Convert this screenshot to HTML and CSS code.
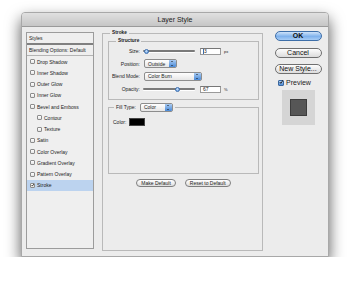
FILE: index.html
```html
<!DOCTYPE html>
<html lang="en">
<head>
    <meta charset="UTF-8">
    <meta name="viewport" content="width=device-width, initial-scale=1.0">
    <title>Layer Style</title>
    <link rel="stylesheet" href="styles.css">
</head>
<body>
    <div class="window">
        <div class="titlebar">Layer Style</div>

        <div class="dialog">
            <div class="style-list">
                <div class="list-head">Styles</div>
                <div class="list-blend">Blending Options: Default</div>
                <div class="list-item"><span class="box"></span>Drop Shadow</div>
                <div class="list-item"><span class="box"></span>Inner Shadow</div>
                <div class="list-item"><span class="box"></span>Outer Glow</div>
                <div class="list-item"><span class="box"></span>Inner Glow</div>
                <div class="list-item"><span class="box"></span>Bevel and Emboss</div>
                <div class="list-item sub"><span class="box"></span>Contour</div>
                <div class="list-item sub"><span class="box"></span>Texture</div>
                <div class="list-item"><span class="box"></span>Satin</div>
                <div class="list-item"><span class="box"></span>Color Overlay</div>
                <div class="list-item"><span class="box"></span>Gradient Overlay</div>
                <div class="list-item"><span class="box"></span>Pattern Overlay</div>
                <div class="list-item selected">
                    <span class="box"><svg viewBox="0 0 6 6"><polyline points="1,3 2.4,4.8 5.6,0.4" /></svg></span>Stroke
                </div>
            </div>

            <fieldset class="panel">
                <legend>Stroke</legend>

                <fieldset class="group">
                    <legend>Structure</legend>
                    <div class="row">
                        <span class="label">Size:</span>
                        <div class="slider"><span class="thumb" style="left: calc(7% - 2.5px)"></span></div>
                        <span class="field"><span class="caret"></span>3</span>
                        <span class="unit">px</span>
                    </div>
                    <div class="row">
                        <span class="label">Position:</span>
                        <span class="popup short">Outside<span class="arrows"></span></span>
                    </div>
                    <div class="row">
                        <span class="label">Blend Mode:</span>
                        <span class="popup wide">Color Burn<span class="arrows"></span></span>
                    </div>
                    <div class="row">
                        <span class="label">Opacity:</span>
                        <div class="slider"><span class="thumb" style="left: calc(67% - 2.5px)"></span></div>
                        <span class="field">67</span>
                        <span class="unit">%</span>
                    </div>
                </fieldset>

                <fieldset class="group fill">
                    <legend>Fill Type: <span class="popup short">Color<span class="arrows"></span></span></legend>
                    <div class="color-row">Color: <span class="swatch"></span></div>
                </fieldset>

                <div class="defaults">
                    <button class="small-btn">Make Default</button>
                    <button class="small-btn">Reset to Default</button>
                </div>
            </fieldset>

            <div class="actions">
                <button class="btn primary">OK</button>
                <button class="btn">Cancel</button>
                <button class="btn">New Style...</button>
                <div class="preview">
                    <span class="box blue"><svg viewBox="0 0 6 6"><polyline points="1,3 2.4,4.8 5.6,0.4" /></svg></span>Preview
                </div>
                <div class="thumbnail"><span class="thumb-square"></span></div>
            </div>
        </div>
    </div>
</body>
</html>
```

FILE: styles.css
```css
* {
    margin: 0;
    padding: 0;
    box-sizing: border-box;
}

body {
    background: #fff;
    font-family: "Liberation Sans", Arial, sans-serif;
    font-size: 5px;
    color: #1c1c1c;
}

.window {
    margin: 12px 0 0 21px;
    width: 308px;
    height: 245px;
    background: #ececec;
    border: 1px solid #a8a8a8;
    border-radius: 4px 4px 0 0;
    box-shadow: 0 7px 15px rgba(0, 0, 0, 0.65);
}

.titlebar {
    height: 14px;
    line-height: 13px;
    text-align: center;
    font-size: 7px;
    color: #222;
    background: linear-gradient(#e0e0e0, #c6c6c6);
    border-bottom: 1px solid #9a9a9a;
    border-radius: 3px 3px 0 0;
}

.dialog {
    display: flex;
    align-items: flex-start;
    padding: 2px 0 0 4px;
}

/* left list */
.style-list {
    width: 68px;
    height: 217px;
    margin-top: 3px;
    border: 1px solid #9c9c9c;
    background: #efefef;
}

.list-head {
    height: 12px;
    line-height: 10px;
    padding-left: 2px;
    border-bottom: 2px solid #808080;
}

.list-blend {
    height: 11px;
    line-height: 10px;
    padding-left: 2px;
    border-bottom: 1px solid #b4b4b4;
}

.list-item {
    display: flex;
    align-items: center;
    gap: 2px;
    height: 11.25px;
    padding-left: 3px;
}

.list-item.sub {
    padding-left: 10px;
}

.list-item.selected {
    background: #bcd3ef;
}

.box {
    display: inline-flex;
    width: 5px;
    height: 5px;
    background: linear-gradient(#fff, #e4e4e4);
    border: 1px solid #8c8c8c;
    border-radius: 1px;
    overflow: visible;
}

.box svg {
    width: 6px;
    height: 6px;
    margin: -2px 0 0 -0.5px;
    fill: none;
    stroke: #111;
    stroke-width: 1.2;
}

/* stroke panel */
.panel {
    width: 161px;
    height: 222px;
    margin-left: 8px;
    padding: 0 3px 0 5px;
    border: 1px solid #b9b9b9;
}

legend {
    line-height: 8px;
    padding: 0 2px;
}

.panel > legend {
    margin-left: 2px;
    font-weight: bold;
    font-size: 4.8px;
}

.group {
    width: 151px;
    padding: 0 4px 4px 2px;
    border: 1px solid #b9b9b9;
}

.group > legend {
    margin-left: 5px;
    font-weight: bold;
    font-size: 4.8px;
}

.row {
    display: flex;
    align-items: center;
    height: 12.6px;
}

.label {
    width: 29px;
    margin-right: 3px;
    text-align: right;
}

.slider {
    position: relative;
    width: 52px;
    height: 2px;
    background: #7a7a7a;
    border-radius: 1px;
    box-shadow: 0 1px 0 #fff;
}

.thumb {
    position: absolute;
    top: -1.5px;
    width: 5px;
    height: 5px;
    border-radius: 50%;
    background: radial-gradient(circle at 40% 35%, #d6e8fb, #4f8fdb);
    border: 0.5px solid #3a6eb0;
}

.field {
    display: flex;
    align-items: center;
    width: 21px;
    height: 7px;
    line-height: 6px;
    margin-left: 5px;
    padding-left: 2px;
    background: #fff;
    border: 1px solid #9a9a9a;
    border-top-color: #777;
}

.caret {
    width: 0.6px;
    height: 5px;
    margin-right: 0.5px;
    background: #3a6eb0;
}

.unit {
    margin-left: 3px;
    font-size: 4px;
}

.popup {
    display: inline-flex;
    align-items: center;
    justify-content: space-between;
    height: 9px;
    margin-left: 1px;
    padding-left: 3px;
    background: linear-gradient(#fff, #e6e6e6);
    border: 1px solid #8d8d8d;
    border-radius: 2px;
    font-weight: normal;
}

.popup.short {
    width: 33px;
}

.popup.wide {
    width: 58px;
}

.arrows {
    position: relative;
    width: 7px;
    height: 7px;
    border-radius: 0 1px 1px 0;
    background: linear-gradient(#a9cbf2, #4a8ad8);
}

.arrows::before,
.arrows::after {
    content: "";
    position: absolute;
    left: 2px;
    border-left: 1.5px solid transparent;
    border-right: 1.5px solid transparent;
}

.arrows::before {
    top: 1px;
    border-bottom: 1.5px solid #111;
}

.arrows::after {
    bottom: 1px;
    border-top: 1.5px solid #111;
}

.fill {
    height: 71px;
    margin-top: 3px;
    padding: 6px 4px 0 4px;
}

.fill > legend {
    display: flex;
    align-items: center;
    margin-left: 1px;
    font-weight: normal;
    font-size: 5px;
    line-height: 9px;
}

.fill > legend .popup {
    margin-left: 4px;
}

.color-row {
    display: flex;
    align-items: center;
    gap: 3px;
}

.swatch {
    width: 16px;
    height: 8px;
    background: #000;
    border: 1px solid #444;
}

.defaults {
    display: flex;
    justify-content: center;
    gap: 9px;
    margin-top: 5px;
}

.small-btn {
    height: 8px;
    padding: 0 4px;
    font-family: inherit;
    font-size: 5px;
    color: #222;
    background: linear-gradient(#fff, #dedede);
    border: 1px solid #7f7f7f;
    border-radius: 5px;
}

/* right column */
.actions {
    display: flex;
    flex-direction: column;
    align-items: center;
    width: 48px;
    margin: 2px 0 0 11px;
    font-size: 7px;
}

.btn {
    width: 47px;
    height: 10px;
    margin-bottom: 6.5px;
    font-family: inherit;
    font-size: 7px;
    line-height: 8px;
    color: #111;
    background: linear-gradient(#fdfdfd, #dcdcdc);
    border: 1px solid #6f6f6f;
    border-radius: 5px;
}

.btn.primary {
    font-weight: bold;
    background: linear-gradient(#cfe3fa, #7fb2ec 55%, #a8cdf5);
    border-color: #3d6ea8;
}

.preview {
    display: flex;
    align-items: center;
    gap: 2px;
    align-self: flex-start;
    margin: -2px 0 0 4px;
    line-height: 8px;
}

.box.blue {
    width: 6px;
    height: 6px;
    background: linear-gradient(#b8d5f6, #4d8cd8);
    border-color: #3b679e;
}

.thumbnail {
    display: flex;
    align-items: center;
    justify-content: center;
    width: 33px;
    height: 35px;
    margin-top: 3px;
    background: #d5d5d5;
}

.thumb-square {
    width: 17px;
    height: 17px;
    background: #565656;
    border: 1px solid #3c3c3c;
}
```
